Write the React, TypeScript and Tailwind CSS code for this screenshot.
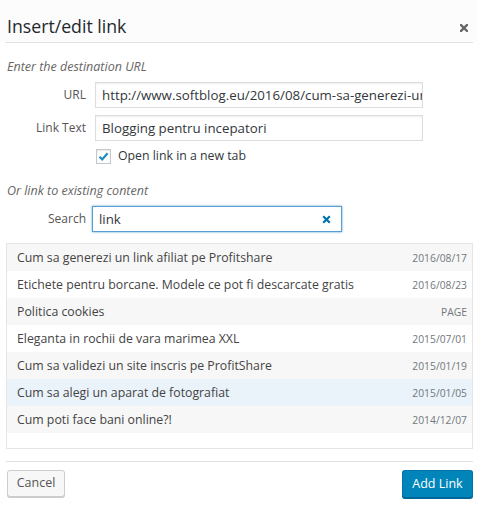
import React from "react";

const rows: { title: string; info: string; bg: string }[] = [
  { title: "Cum sa generezi un link afiliat pe Profitshare", info: "2016/08/17", bg: "bg-[#f7f7f7]" },
  { title: "Etichete pentru borcane. Modele ce pot fi descarcate gratis", info: "2016/08/23", bg: "bg-white" },
  { title: "Politica cookies", info: "PAGE", bg: "bg-[#f7f7f7]" },
  { title: "Eleganta in rochii de vara marimea XXL", info: "2015/07/01", bg: "bg-white" },
  { title: "Cum sa validezi un site inscris pe ProfitShare", info: "2015/01/19", bg: "bg-[#f7f7f7]" },
  { title: "Cum sa alegi un aparat de fotografiat", info: "2015/01/05", bg: "bg-[#eaf2fa]" },
  { title: "Cum poti face bani online?!", info: "2014/12/07", bg: "bg-[#f7f7f7]" },
];

export default function App() {
  return (
    <div className="w-[478px] h-[511px] bg-white overflow-hidden font-['Open_Sans',sans-serif] text-[#32373c]">
      {/* Header */}
      <div className="bg-[#fcfcfc] h-[42px] px-[7px] flex items-start justify-between">
        <div className="pt-[14px] text-[17.7px] leading-[24px] font-normal text-[#23282d]">Insert/edit link</div>
        <svg className="mt-[24px] mr-[3px]" width="8" height="8" viewBox="0 0 8 8">
          <path d="M1 1 L7 7 M7 1 L1 7" stroke="#666" strokeWidth="2.4" strokeLinecap="square" />
        </svg>
      </div>
      <div className="mx-[5px] h-px bg-[#e2e2e2]" />

      <div className="px-[7px]">
        <p className="mt-[15px] text-[12.5px] leading-[18px] italic text-[#666]">Enter the destination URL</p>

        <div className="mt-[6px] flex items-center">
          <span className="w-[79px] text-right text-[12px] text-[#555]">URL</span>
          <div className="ml-[9px] w-[328px] h-[26px] border border-[#ddd] shadow-[inset_0_1px_2px_rgba(0,0,0,0.07)] pl-[6px] text-[13.3px] leading-[24px] whitespace-nowrap overflow-hidden">
            http://www.softblog.eu/2016/08/cum-sa-generezi-un-link-afiliat-pe-profitshare/
          </div>
        </div>

        <div className="mt-[7px] flex items-center">
          <span className="w-[79px] text-right text-[12px] text-[#555]">Link Text</span>
          <div className="ml-[9px] w-[328px] h-[26px] border border-[#ddd] shadow-[inset_0_1px_2px_rgba(0,0,0,0.07)] pl-[6px] text-[13.3px] leading-[24px] whitespace-nowrap overflow-hidden">
            Blogging pentru incepatori
          </div>
        </div>

        <div className="mt-[8px] h-[15px] flex items-center pl-[89px]">
          <div className="w-[15px] h-[15px] border border-[#c4c8cc] bg-white shadow-[inset_0_1px_2px_rgba(0,0,0,0.1)] flex items-center justify-center">
            <svg width="13" height="13" viewBox="0 0 13 13">
              <path d="M2.5 6.8 L5.2 9.4 L10.6 3.2" fill="none" stroke="#1e8cbe" strokeWidth="2.2" />
            </svg>
          </div>
          <span className="ml-[7px] text-[12.3px] text-[#32373c]">Open link in a new tab</span>
        </div>

        <p className="mt-[18px] text-[12.5px] leading-[18px] italic text-[#666]">Or link to existing content</p>

        <div className="mt-[6px] flex items-center">
          <span className="w-[79px] text-right text-[12px] text-[#555]">Search</span>
          <div className="ml-[6px] w-[250px] h-[26px] border border-[#5b9dd9] shadow-[0_0_2px_rgba(30,140,190,0.8)] pl-[6px] pr-[10px] text-[13.3px] leading-[24px] flex items-center justify-between">
            <span>link</span>
            <svg width="9" height="9" viewBox="0 0 9 9">
              <path d="M1.2 1.2 L7.8 7.8 M7.8 1.2 L1.2 7.8" stroke="#0073aa" strokeWidth="2.2" />
            </svg>
          </div>
        </div>

        <div className="mt-[11px] -ml-px w-[467px] h-[206px] border border-[#e5e5e5] bg-white">
          {rows.map((r) => (
            <div key={r.title} className={`h-[27px] pt-[2px] flex items-center justify-between pl-[10px] pr-[5px] ${r.bg}`}>
              <span className="text-[12.3px] text-[#444]">{r.title}</span>
              <span className="text-[10.3px] text-[#72777c]">{r.info}</span>
            </div>
          ))}
        </div>

        <div className="mt-[12px] -ml-px w-[467px] h-px bg-[#e2e2e2]" />

        <div className="mt-[8px] flex items-start justify-between">
          <button className="w-[58px] h-[27px] rounded-[3px] border border-[#ccc] bg-[#f7f7f7] shadow-[0_1px_0_#ccc] text-[12.5px] text-[#555]">
            Cancel
          </button>
          <button className="mr-[-2px] w-[71px] h-[28px] rounded-[3px] border border-[#0073aa] border-b-[#006799] bg-[#0085ba] shadow-[0_1px_0_#006799] text-[12.5px] text-white">
            Add Link
          </button>
        </div>
      </div>
    </div>
  );
}
